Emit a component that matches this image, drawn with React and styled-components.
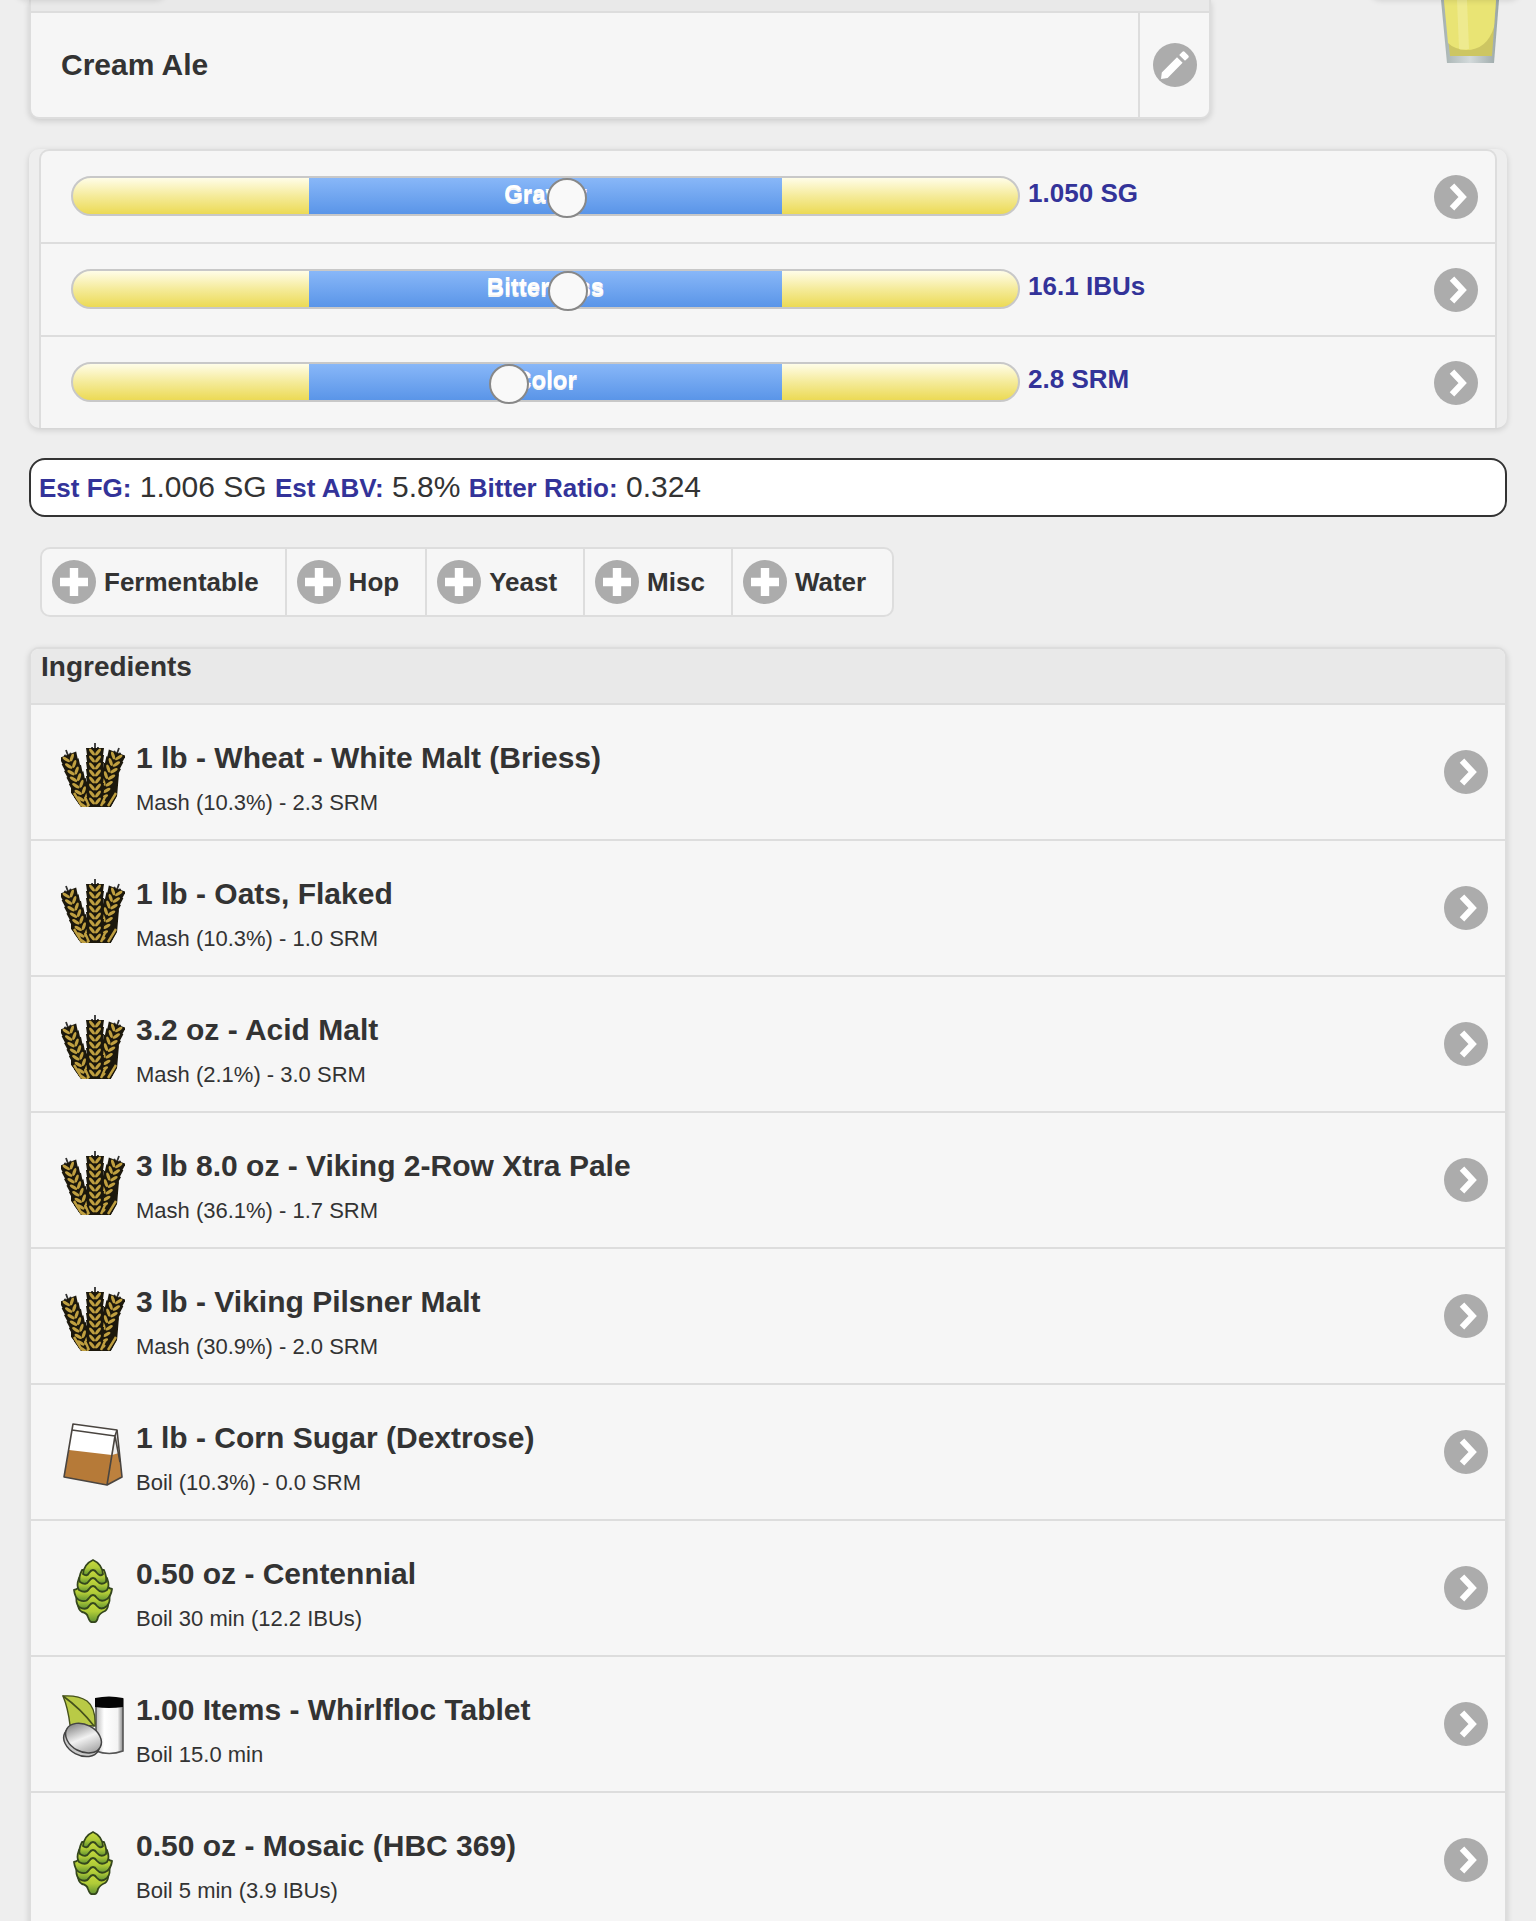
import styled, { createGlobalStyle } from "styled-components";

const gauges = [
  { id: "gravity", label: "Gravity", value: "1.050 SG", position: 52.4 },
  { id: "bitterness", label: "Bitterness", value: "16.1 IBUs", position: 52.5 },
  { id: "color", label: "Color", value: "2.8 SRM", position: 46 },
];

const stats = [
  { label: "Est FG:", value: "1.006 SG" },
  { label: "Est ABV:", value: "5.8%" },
  { label: "Bitter Ratio:", value: "0.324" },
];

const addButtons = ["Fermentable", "Hop", "Yeast", "Misc", "Water"];

const ingredients = [
  { icon: "grain", title: "1 lb - Wheat - White Malt (Briess)", detail: "Mash (10.3%) - 2.3 SRM" },
  { icon: "grain", title: "1 lb - Oats, Flaked", detail: "Mash (10.3%) - 1.0 SRM" },
  { icon: "grain", title: "3.2 oz - Acid Malt", detail: "Mash (2.1%) - 3.0 SRM" },
  { icon: "grain", title: "3 lb 8.0 oz - Viking 2-Row Xtra Pale", detail: "Mash (36.1%) - 1.7 SRM" },
  { icon: "grain", title: "3 lb - Viking Pilsner Malt", detail: "Mash (30.9%) - 2.0 SRM" },
  { icon: "sugar", title: "1 lb - Corn Sugar (Dextrose)", detail: "Boil (10.3%) - 0.0 SRM" },
  { icon: "hop", title: "0.50 oz - Centennial", detail: "Boil 30 min (12.2 IBUs)" },
  { icon: "misc", title: "1.00 Items - Whirlfloc Tablet", detail: "Boil 15.0 min" },
  { icon: "hop", title: "0.50 oz - Mosaic (HBC 369)", detail: "Boil 5 min (3.9 IBUs)" },
];


function App() {
  return (
    <>
      <GlobalStyle />
      <TopButtons aria-hidden="true">
        <TopShade />
        <TopShade />
      </TopButtons>
      <Page>
        <TitleRow>
          <NameCard>
            <NameDivider />
            <NameItem>
              <NameLink href="#name">Cream Ale</NameLink>
              <EditButton type="button" aria-label="Edit name">
                <CircleIcon name="edit" />
              </EditButton>
            </NameItem>
          </NameCard>
          <GlassHolder>
            <Glass />
          </GlassHolder>
        </TitleRow>

        <GaugeCard>
          <GaugeList>
            {gauges.map((gauge) => (
              <Gauge key={gauge.id} {...gauge} />
            ))}
          </GaugeList>
        </GaugeCard>

        <StatsBox>
          {stats.map(({ label, value }) => (
            <span key={label}>
              <StatLabel>{label}</StatLabel> {value}{" "}
            </span>
          ))}
        </StatsBox>

        <ButtonGroup>
          {addButtons.map((name) => (
            <AddButton key={name} type="button">
              <CircleIcon name="plus" />
              {name}
            </AddButton>
          ))}
        </ButtonGroup>

        <IngredientCard>
          <IngredientHeading>Ingredients</IngredientHeading>
          <IngredientList>
            {ingredients.map((item) => (
              <Ingredient key={item.title} {...item} />
            ))}
          </IngredientList>
        </IngredientCard>
      </Page>
    </>
  );
}

export default App;


function Gauge({ id, label, value, position }) {
  return (
    <GaugeRow>
      <GaugeBar>
        <GaugeRange>
          <label htmlFor={id}>{label}</label>
        </GaugeRange>
        <GaugeInput id={id} type="range" min="0" max="100" step="0.1" defaultValue={position} />
      </GaugeBar>
      <GaugeLink href={"#" + id}>
        <span>{value}</span>
        <CircleIcon name="arrow" />
      </GaugeLink>
    </GaugeRow>
  );
}

function Ingredient({ icon, title, detail }) {
  const Picture = pictures[icon];
  return (
    <li>
      <IngredientLink href="#ingredient">
        <Picture />
        <IngredientText>
          <IngredientTitle>{title}</IngredientTitle>
          <IngredientDetail>{detail}</IngredientDetail>
        </IngredientText>
        <CircleIcon name="arrow" />
      </IngredientLink>
    </li>
  );
}

function CircleIcon({ name }) {
  return (
    <CircleSvg viewBox="0 0 44 44" aria-hidden="true">
      <circle cx="22" cy="22" r="22" fill="#acacac" />
      {name === "arrow" && (
        <path d="M18 10.7L28.6 22L18 33.3" fill="none" stroke="#fff" strokeWidth="6.2" />
      )}
      {name === "plus" && (
        <path d="M17.8 8H26.2V17.8H36V26.2H26.2V36H17.8V26.2H8V17.8H17.8Z" fill="#fff" />
      )}
      {name === "edit" && (
        <path
          d="M8 36L8.8 29.4L24 14.3L29.6 19.8L14.6 35ZM26.2 12L29.4 8.8Q30.6 7.8 31.8 8.9L35.3 12.4Q36.4 13.6 35.3 14.8L32 17.8Z"
          fill="#fff"
        />
      )}
    </CircleSvg>
  );
}

function Glass() {
  return (
    <GlassSvg viewBox="0 0 60 64" aria-hidden="true">
      <defs>
        <linearGradient id="glassEdge">
          <stop offset="0" stopColor="#a3afae" />
          <stop offset="0.5" stopColor="#d3dadb" />
          <stop offset="1" stopColor="#98a5a5" />
        </linearGradient>
      </defs>
      <path d="M1 0H59L54 63H7Z" fill="url(#glassEdge)" />
      <path d="M4 0H56L52 56H10Z" fill="#cdc662" />
      <path d="M4 0H56L54 27Q47 50 26 50Q14 49 8 43Z" fill="#e9e474" />
      <path d="M17 0H27L29 49Q22 50 19 49Z" fill="#efeb96" opacity="0.8" />
    </GlassSvg>
  );
}

// One ear of grain: kernels in pairs from the tip down to the base
function Ear({ x, y, lean }) {
  const rows = [9, 16, 23, 30, 37, 44, 51, 58];
  return (
    <g transform={`translate(${x} ${y}) rotate(${lean})`}>
      <path d="M0 0V10M-3 4L-2 12M3 4L2 12" stroke="#333" strokeWidth="1.8" />
      {rows.map((top) => (
        <path
          key={top}
          d={`M-9 ${top - 4}L0 ${top - 4}L9 ${top - 4}L8 ${top + 3}L6 ${top + 6}H-6L-8 ${top + 3}Z`}
          fill="#1c180c"
        />
      ))}
      {rows.map((top) => (
        <g key={top} fill="#bf9f40">
          <ellipse cx="-3" cy={top} rx="1.6" ry="4.2" transform={`rotate(-38 -3 ${top})`} />
          <ellipse cx="3" cy={top} rx="1.6" ry="4.2" transform={`rotate(38 3 ${top})`} />
        </g>
      ))}
    </g>
  );
}

function GrainPicture() {
  return (
    <PictureSvg viewBox="0 0 64 64" aria-hidden="true">
      <clipPath id="grainClip">
        <path d="M-2 -2H66V25L60 46L50 64H20L7 46L-2 16Z" />
      </clipPath>
      <g clipPath="url(#grainClip)">
        <path d="M10 32L34 42L58 30L56 54L50 64H20L10 50Z" fill="#1c180c" />
        <Ear x={5} y={7} lean={-20} />
        <Ear x={58} y={5} lean={20} />
        <Ear x={34} y={0} lean={0} />
        <path d="M13 50L21 63M55 50L47 63M24 54L28 63M44 54L40 63" stroke="#bf9f40" strokeWidth="2.4" />
      </g>
    </PictureSvg>
  );
}

function SugarPicture() {
  return (
    <PictureSvg viewBox="0 0 64 64" aria-hidden="true">
      <path d="M12 1L56 7L53 14L46 62L3 54Z" fill="#fff" />
      <path d="M56 7L61 54L46 62L53 14Z" fill="#eee" />
      <path d="M8 27L51 32L46 62L3 54Z" fill="#b67a38" />
      <path d="M51 32L58 30L61 54L46 62Z" fill="#bd813e" />
      <g fill="none" stroke="#4a4540" strokeWidth="1.6" strokeLinejoin="round">
        <path d="M12 1L56 7L61 54L46 62L3 54Z" />
        <path d="M11 7L54 13L46 62M56 7L54 13L59 39" />
      </g>
    </PictureSvg>
  );
}

function HopPicture() {
  return (
    <PictureSvg viewBox="0 0 64 64" aria-hidden="true">
      <defs>
        <linearGradient id="hopLeaf" x1="0" x2="0" y1="0" y2="1">
          <stop offset="0" stopColor="#c9da3e" />
          <stop offset="0.5" stopColor="#b0cb38" />
          <stop offset="1" stopColor="#5f9130" />
        </linearGradient>
      </defs>
      <g fill="url(#hopLeaf)" stroke="#34461d" strokeWidth="1.8" strokeLinejoin="round">
        <path d="M17 42Q16 50 21 53Q26 54 27 58Q29 64 32 63Q36 64 37 58Q39 54 44 52Q48 49 47 42Z" />
        <path d="M16 34Q14 44 18 48Q25 52 28 47Q32 41 36 47Q40 52 46 47Q50 43 48 34Z" />
        <path d="M18 26Q18 30 13 31Q14 39 18 41Q25 44 28 39Q32 33 36 39Q40 44 46 40Q50 37 51 30Q46 29 47 26Z" />
        <path d="M18 19Q15 27 18 31Q25 35 28 30Q32 24 36 30Q40 35 46 31Q49 27 46 19Z" />
        <path d="M21 11Q17 19 19 23Q25 27 28 22Q32 16 36 22Q40 27 45 23Q46 18 43 11Z" />
        <path d="M32 1Q23 5 22 15Q26 18 28 14Q32 8 36 14Q39 18 42 15Q41 5 32 1Z" />
      </g>
    </PictureSvg>
  );
}

function MiscPicture() {
  return (
    <PictureSvg viewBox="0 0 64 64" aria-hidden="true">
      <defs>
        <linearGradient id="bottleShade">
          <stop offset="0" stopColor="#bbb" />
          <stop offset="0.3" stopColor="#fff" />
          <stop offset="0.8" stopColor="#f4f4f4" />
          <stop offset="1" stopColor="#888" />
        </linearGradient>
        <linearGradient id="tabletShade" x1="0" x2="1" y1="0.2" y2="0.8">
          <stop offset="0" stopColor="#777" />
          <stop offset="0.5" stopColor="#f2f2f2" />
          <stop offset="1" stopColor="#999" />
        </linearGradient>
      </defs>
      <path d="M35 4V56Q48 61 62 56V4Z" fill="url(#bottleShade)" stroke="#555" strokeWidth="1.6" />
      <path d="M34 3Q48 0 62 3V12Q48 14 34 12Z" fill="#050505" />
      <path d="M2 1Q17 0 26 6Q35 13 34 31L9 30Q7 13 2 1Z" fill="#b9ca46" stroke="#45511c" strokeWidth="1.4" />
      <path d="M2 1Q20 14 33 31" fill="none" stroke="#45511c" strokeWidth="1.6" />
      <g transform="rotate(28 22 44)" stroke="#444" strokeWidth="1.5">
        <ellipse cx="22" cy="47" rx="19" ry="13.5" fill="#c9c9c9" />
        <ellipse cx="22" cy="43" rx="19" ry="13.5" fill="url(#tabletShade)" />
      </g>
    </PictureSvg>
  );
}

const GlobalStyle = createGlobalStyle`
  * {
    box-sizing: border-box;
  }
  body {
    margin: 0;
    background: #eeeeee;
    color: #333333;
    font-family: Helvetica, "Liberation Sans", Arial, sans-serif;
    font-size: 26px;
    overflow-x: hidden;
  }
  a {
    color: inherit;
    text-decoration: none;
  }
  button {
    font: inherit;
    color: inherit;
    border: 0;
    background: none;
    cursor: pointer;
  }
`;

const Page = styled.main`
  display: flex;
  flex-direction: column;
  gap: 30px;
  padding: 0 29px;
`;

/* bottom edge of the toolbar buttons, scrolled just out of view */
const TopButtons = styled.div`
  position: absolute;
  top: -42px;
  left: 0;
  right: 0;
  display: flex;
  justify-content: space-between;
  padding: 0 16px;
  pointer-events: none;
`;

const TopShade = styled.div`
  width: 10%;
  height: 40px;
  border-radius: 10px;
  box-shadow: 0 2px 6px rgba(0, 0, 0, 0.15);
`;

const TitleRow = styled.div`
  display: flex;
  justify-content: space-between;
`;

const Card = styled.section`
  border: 2px solid #dddddd;
  border-radius: 10px;
  background: #f6f6f6;
  box-shadow: 0 2px 6px rgba(0, 0, 0, 0.15);
`;

const NameCard = styled(Card)`
  width: 80%;
  border-top: 0;
  border-top-left-radius: 0;
  border-top-right-radius: 0;
`;

const NameDivider = styled.div`
  height: 13px;
  background: #e9e9e9;
  border-bottom: 2px solid #dddddd;
`;

const NameItem = styled.div`
  display: flex;
`;

const NameLink = styled.a`
  flex: 1;
  padding-left: 30px;
  font-size: 30px;
  font-weight: bold;
  line-height: 104px;
`;

const EditButton = styled.button`
  display: flex;
  align-items: center;
  justify-content: center;
  width: 71px;
  padding: 0;
  border-left: 2px solid #dddddd;
`;

const GlassHolder = styled.div`
  padding-right: 7px;
`;

const GlassSvg = styled.svg`
  display: block;
  width: 60px;
  height: 64px;
`;

const CircleSvg = styled.svg`
  display: block;
  flex: none;
  width: 44px;
  height: 44px;
`;

const GaugeCard = styled.section`
  padding: 0 10px;
  border-radius: 10px;
  box-shadow: 0 2px 6px rgba(0, 0, 0, 0.15);
`;

const GaugeList = styled.div`
  border: 2px solid #dddddd;
  border-bottom: 0;
  border-radius: 10px 10px 0 0;
  background: #f6f6f6;
`;

const GaugeRow = styled.div`
  display: flex;
  align-items: center;
  padding: 24px 0 25px;

  & + & {
    border-top: 2px solid #dddddd;
  }
`;

const GaugeBar = styled.div`
  position: relative;
  box-sizing: content-box;
  flex: none;
  width: 65%;
  height: 36px;
  margin-left: 30px;
  border: 2px solid #c8c8c8;
  border-radius: 20px;
  background: linear-gradient(#fffde8, #f5eb9a 50%, #ecda55);
`;

const GaugeRange = styled.div`
  width: 50%;
  height: 36px;
  margin: 0 auto;
  background: linear-gradient(#88b7f8, #5a95e8);
  color: #ffffff;
  font-size: 24px;
  font-weight: bold;
  line-height: 32px;
  text-align: center;
  text-shadow: 0 2px 0 #f3f3f3;
`;

const GaugeInput = styled.input`
  appearance: none;
  position: absolute;
  top: 0;
  left: 0;
  width: 100%;
  height: 40px;
  margin: 0;
  background: transparent;

  &::-webkit-slider-thumb {
    appearance: none;
    width: 40px;
    height: 40px;
    border: 2px solid #888888;
    border-radius: 50%;
    background: #f9f9f9;
  }
`;

const GaugeLink = styled.a`
  display: flex;
  flex: 1;
  justify-content: space-between;
  height: 42px;
  padding: 0 17px 0 8px;
  color: #333399;
  font-weight: bold;
  line-height: 36px;
`;

const StatsBox = styled.div`
  padding: 0 8px;
  border: 2px solid #333333;
  border-radius: 16px;
  background: #ffffff;
  font-size: 30px;
  line-height: 54px;
`;

const StatLabel = styled.b`
  color: #333399;
  font-size: 26px;
`;

const ButtonGroup = styled.div`
  display: flex;
  align-self: flex-start;
  margin-left: 11px;
  border: 2px solid #dddddd;
  border-radius: 10px;
  background: #f6f6f6;
`;

const AddButton = styled.button`
  display: flex;
  align-items: center;
  gap: 8px;
  height: 66px;
  padding: 0 26px 0 10px;
  font-weight: bold;

  & + & {
    border-left: 2px solid #dddddd;
  }
`;

const IngredientCard = styled(Card)`
  border-bottom: 0;
  border-bottom-left-radius: 0;
  border-bottom-right-radius: 0;
`;

const IngredientHeading = styled.h2`
  margin: 0;
  padding: 0 10px 18px;
  border-radius: 8px 8px 0 0;
  background: #e9e9e9;
  font-size: 28px;
  line-height: 36px;
`;

const IngredientList = styled.ul`
  margin: 0;
  padding: 0;
  list-style: none;
`;

const IngredientLink = styled.a`
  display: flex;
  align-items: center;
  gap: 11px;
  padding: 0 17px 0 30px;
  border-top: 2px solid #dddddd;
`;

const IngredientText = styled.div`
  flex: 1;
  padding: 34px 0 22px;
`;

const IngredientTitle = styled.h3`
  margin: 0 0 12px;
  font-size: 30px;
  line-height: 38px;
`;

const IngredientDetail = styled.p`
  margin: 0;
  font-size: 22px;
  line-height: 28px;
`;

const PictureSvg = styled.svg`
  flex: none;
  align-self: flex-start;
  width: 64px;
  height: 64px;
  margin-top: 38px;
`;

const pictures = {
  grain: GrainPicture,
  sugar: SugarPicture,
  hop: HopPicture,
  misc: MiscPicture,
};
